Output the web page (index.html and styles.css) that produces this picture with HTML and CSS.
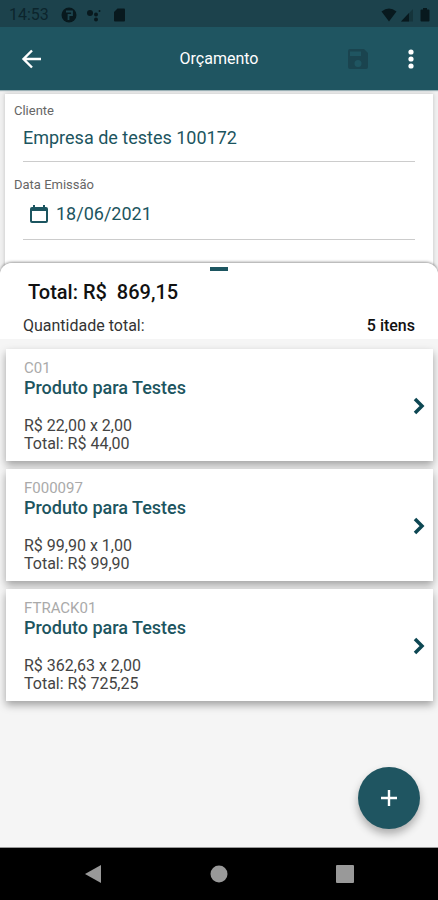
FILE: index.html
```html
<!DOCTYPE html>
<html lang="pt-BR">
<head>
<meta charset="utf-8">
<meta name="viewport" content="width=device-width, initial-scale=1">
<title>Orçamento</title>
<link rel="stylesheet" href="styles.css">
</head>
<body>
<div class="status">
  <span class="clock">14:53</span>
  <svg class="s-icon" width="16" height="16" viewBox="0 0 16 16"><circle cx="8" cy="8" r="7.500"/><path d="M5 4.500h6v3.500H7.500V13" fill="none" stroke="#1c444e" stroke-width="1.800"/></svg>
  <svg class="s-icon" width="16" height="16" viewBox="0 0 16 16"><circle cx="4" cy="6" r="3"/><circle cx="10" cy="7.500" r="2"/><circle cx="10" cy="12.500" r="2"/><circle cx="13.500" cy="4" r="1"/></svg>
  <svg class="s-icon" width="16" height="16" viewBox="0 0 16 16"><path d="M6.500 1.500H13q1 0 1 1v11q0 1-1 1H4q-1 0-1-1V5z"/></svg>
  <span class="grow"></span>
  <svg class="s-icon" width="16" height="16" viewBox="0 0 16 16"><path d="M8 14.500.5 4.500Q8-1.500 15.500 4.500z"/></svg>
  <svg class="s-icon" width="14" height="16" viewBox="0 0 14 16"><path d="M1 14.500 13 2v12.500z" opacity=".35"/><path d="M1 14.500 9 6v8.500z"/></svg>
  <svg class="s-icon" width="16" height="16" viewBox="0 0 16 16"><path d="M6 1h4v1.500h1.500q1 0 1 1v10q0 1-1 1h-7q-1 0-1-1v-10q0-1 1-1H6z"/></svg>
</div>
<header class="appbar">
  <button class="icon-btn back" aria-label="Voltar"><svg width="24" height="24" viewBox="0 0 24 24"><path d="M21 12H4M12 3.500 3.500 12l8.500 8.500" fill="none" stroke="#fff" stroke-width="2.400"/></svg></button>
  <h1>Orçamento</h1>
  <div class="actions">
    <button class="icon-btn" aria-label="Salvar" disabled><svg width="26" height="26" viewBox="0 0 26 26"><path fill="#1a444f" fill-rule="evenodd" d="M5 3h14l4 4v14q0 2-2 2H5q-2 0-2-2V5q0-2 2-2zM5 5.500v4.500h11V5.500zM13 14a3.500 3.500 0 1 0 0 7 3.500 3.500 0 0 0 0-7z"/></svg></button>
    <button class="icon-btn" aria-label="Mais opções"><svg width="24" height="24" viewBox="0 0 24 24" fill="#fff"><circle cx="12" cy="5" r="2.600"/><circle cx="12" cy="12" r="2.600"/><circle cx="12" cy="19" r="2.600"/></svg></button>
  </div>
</header>
<form class="form">
  <div class="field">
    <label for="cliente">Cliente</label>
    <div class="control"><input id="cliente" type="text" value="Empresa de testes 100172"></div>
  </div>
  <div class="field">
    <label for="emissao">Data Emissão</label>
    <div class="control dated">
      <svg width="20" height="20" viewBox="0 0 20 20"><path fill="#1c5560" fill-rule="evenodd" d="M4 1h2v2h8V1h2v2h1q2 0 2 2v12q0 2-2 2H3q-2 0-2-2V5q0-2 2-2h1zM3 7v10h14V7z"/></svg>
      <input id="emissao" type="text" value="18/06/2021">
    </div>
  </div>
  <div class="field"><span class="next-label">Data Validade</span></div>
</form>
<main class="sheet">
  <section class="summary">
    <div class="handle"></div>
    <h2>Total: R$&nbsp; 869,15</h2>
    <div class="count"><span>Quantidade total:</span><strong>5 itens</strong></div>
  </section>
  <ul class="items">
    <li><a class="item" href="#"><span class="code">C01</span><span class="name">Produto para Testes</span><span class="price">R$ 22,00 x 2,00</span><span class="price">Total: R$ 44,00</span><svg class="chev" width="12" height="18" viewBox="0 0 12 18"><path d="M2 2l7 7-7 7"/></svg></a></li>
    <li><a class="item" href="#"><span class="code">F000097</span><span class="name">Produto para Testes</span><span class="price">R$ 99,90 x 1,00</span><span class="price">Total: R$ 99,90</span><svg class="chev" width="12" height="18" viewBox="0 0 12 18"><path d="M2 2l7 7-7 7"/></svg></a></li>
    <li><a class="item" href="#"><span class="code">FTRACK01</span><span class="name">Produto para Testes</span><span class="price">R$ 362,63 x 2,00</span><span class="price">Total: R$ 725,25</span><svg class="chev" width="12" height="18" viewBox="0 0 12 18"><path d="M2 2l7 7-7 7"/></svg></a></li>
  </ul>
  <button class="fab" aria-label="Adicionar"><svg width="18" height="18" viewBox="0 0 18 18"><path d="M9 1v16M1 9h16" stroke="#fff" stroke-width="2.400"/></svg></button>
</main>
<nav class="navbar">
  <button aria-label="Voltar"><svg width="18" height="18" viewBox="0 0 18 18"><path d="M17 0v18L1 9z"/></svg></button>
  <button aria-label="Início"><svg width="18" height="18" viewBox="0 0 18 18"><circle cx="9" cy="9" r="8.500"/></svg></button>
  <button aria-label="Recentes"><svg width="18" height="18" viewBox="0 0 18 18"><rect width="18" height="18" rx="1"/></svg></button>
</nav>
</body>
</html>
```
FILE: styles.css
```css
* { box-sizing: border-box; }
body {
  margin: 0;
  min-height: 100vh;
  display: flex;
  flex-direction: column;
  background: #f0f0f0;
  font-family: Roboto, sans-serif;
  color: #333;
}
button, input { font: inherit; border: 0; background: none; padding: 0; }
button { display: flex; align-items: center; justify-content: center; }
svg { display: block; flex: none; }
.status {
  display: flex;
  align-items: center;
  height: 27px;
  padding: 2px 5px 0 9px;
  background: #1c424c;
  color: #0c252c;
}
.clock { font-size: 16px; margin-right: 12px; }
.s-icon { fill: #08191e; margin-right: 9px; }
.status .grow ~ .s-icon { margin-right: 3px; }
.status .s-icon:last-child { margin-right: 0; }
.grow { flex: 1; }
.appbar {
  display: grid;
  grid-template-columns: 1fr auto 1fr;
  align-items: center;
  height: 63px;
  padding: 0 15px 0 20px;
  margin-bottom: 4px;
  background: #1f5561;
  box-shadow: 0 1px 1px rgba(31, 85, 97, .4);
}
.back { justify-self: start; }
.appbar h1 { margin: 0 5px 0 0; font-size: 16px; font-weight: 400; color: #fff; }
.actions { display: flex; justify-content: flex-end; align-items: center; gap: 28px; }
.form {
  margin: 0 5px;
  padding: 8px 18px 0 9px;
  background: #fff;
  box-shadow: 0 0 4px rgba(0, 0, 0, .2);
}
.field label, .next-label {
  display: block;
  font-size: 13px;
  line-height: 18px;
  color: #666;
}
.next-label { padding-top: 6px; }
.control {
  display: flex;
  align-items: center;
  gap: 7px;
  height: 42px;
  margin: 0 0 14px 9px;
  padding-bottom: 6px;
  border-bottom: 1px solid #ccc;
}
.field .control input { flex: 1; min-width: 0; font-size: 18px; color: #1c5560; }
.dated { height: 46px; padding-left: 6px; }
.sheet {
  position: relative;
  flex: 1;
  margin-top: -15px;
  border-radius: 12px 12px 0 0;
  background: #f5f5f5;
  box-shadow: 0 -1px 3px rgba(0, 0, 0, .4);
}
.summary { padding: 4px 23px 2px; border-radius: 12px 12px 0 0; background: #fff; }
.handle { width: 18px; height: 4px; margin: 0 auto; background: #1c5560; }
.summary h2 { margin: 7px 5px 9px; font-size: 20px; line-height: 28px; font-weight: 500; color: #111; }
.count { display: flex; justify-content: space-between; font-size: 16px; line-height: 22px; }
.count strong { font-weight: 500; color: #111; }
.items { list-style: none; margin: 0; padding: 10px 5px 10px 6px; display: grid; gap: 8px; }
.item {
  position: relative;
  display: flex;
  flex-direction: column;
  padding: 10px 18px 8px;
  background: #fff;
  box-shadow: 0 4px 8px rgba(0, 0, 0, .35);
  color: #444;
  text-decoration: none;
  font-size: 16px;
  line-height: 18px;
}
.code { font-size: 15px; color: #aaa; }
.name { margin-bottom: 18px; font-size: 18px; line-height: 22px; font-weight: 500; color: #1c5560; }
.chev { position: absolute; right: 8px; top: 48px; fill: none; stroke: #0d4753; stroke-width: 3.500; }
.fab {
  position: absolute;
  right: 18px;
  bottom: 18px;
  width: 62px;
  height: 62px;
  border-radius: 50%;
  background: #1f5561;
  box-shadow: 0 5px 9px rgba(0, 0, 0, .3);
}
.navbar {
  position: relative;
  display: flex;
  justify-content: center;
  gap: 108px;
  padding: 17px 0;
  border-top: 1px solid #999;
  background: #000;
}
.navbar svg { fill: #999; }
```
